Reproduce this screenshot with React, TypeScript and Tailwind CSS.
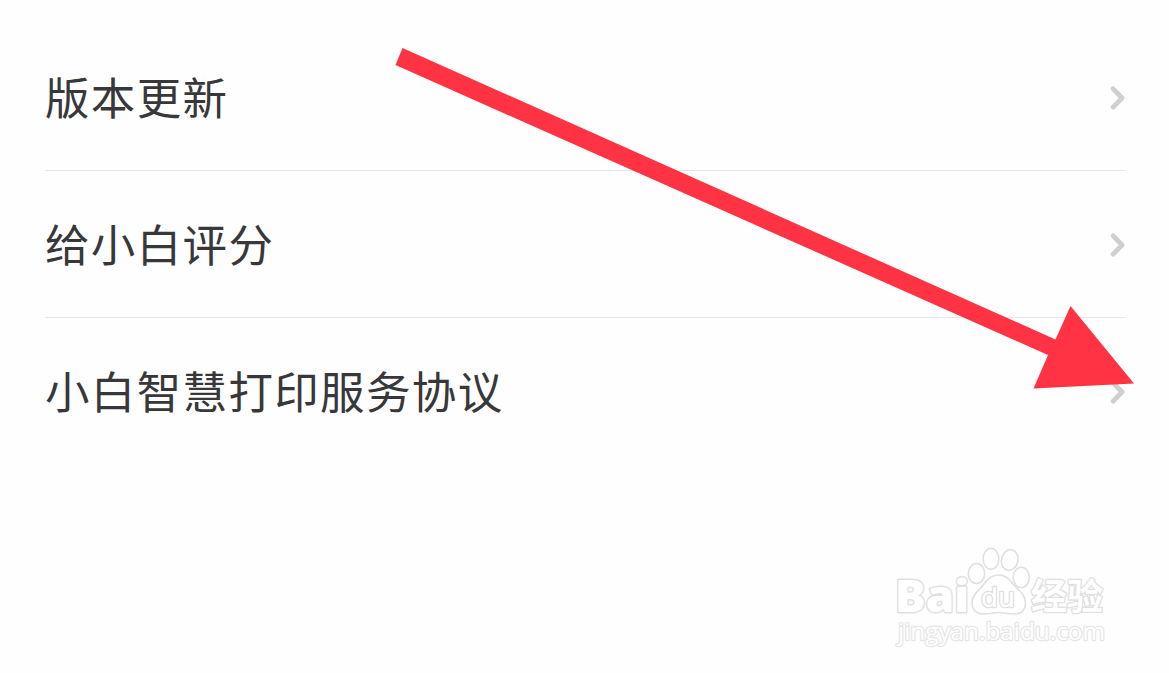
const items = ["版本更新", "给小白评分", "小白智慧打印服务协议"];

function Chevron() {
  return (
    <svg width="16" height="28" viewBox="0 0 16 28" fill="none" className="mt-0.5 shrink-0">
      <path d="M4.2 4.8 L13 14 L4.2 23.2" stroke="#cfcfcf" strokeWidth="4.8" strokeLinecap="round" strokeLinejoin="round" />
    </svg>
  );
}

function Watermark() {
  return (
    <svg width="220" height="110" viewBox="0 0 220 110" className="absolute top-[543px] left-[890px]">
      <g fill="#fff" stroke="#e0e0e0" strokeWidth="1.6" strokeLinejoin="round">
        <text
          x="5"
          y="68.5"
          fontSize="45"
          fontWeight="800"
          strokeWidth="2.8"
          paintOrder="stroke"
          textLength="74"
          lengthAdjust="spacingAndGlyphs"
          fontFamily="'Open Sans', sans-serif"
        >
          Bai
        </text>
        <ellipse cx="86.5" cy="30.5" rx="8.2" ry="10" />
        <ellipse cx="101" cy="15.8" rx="7.8" ry="10.5" />
        <ellipse cx="119.7" cy="17" rx="8.2" ry="10.5" transform="rotate(12 119.7 17)" />
        <ellipse cx="131.3" cy="34.5" rx="8" ry="10.2" />
        <path d="M108.5 32 C102 32 98 35 94 41 C90 47 82 51 82 60 C82 68 88 71.5 95 71 C101 70.5 104 69.5 109 69.5 C114 69.5 118 71 124 71 C131 71 135.5 67 135.5 60 C135.5 51 128 47 123 41 C119 35 115 32 108.5 32 Z" />
        <text
          x="91"
          y="64"
          fontSize="26"
          strokeWidth="2.6"
          paintOrder="stroke"
          textLength="34"
          lengthAdjust="spacingAndGlyphs"
          fontFamily="'DejaVu Sans', sans-serif"
        >
          du
        </text>
        <text
          x="141"
          y="66.5"
          fontSize="36"
          fontWeight="700"
          strokeWidth="2.6"
          paintOrder="stroke"
          textLength="72"
          lengthAdjust="spacingAndGlyphs"
          fontFamily="'Noto Sans CJK SC', sans-serif"
        >
          经验
        </text>
        <text
          x="8"
          y="97"
          fontSize="23"
          strokeWidth="2.4"
          stroke="#e6e6e6"
          paintOrder="stroke"
          textLength="207"
          lengthAdjust="spacingAndGlyphs"
          fontFamily="'Open Sans', sans-serif"
        >
          jingyan.baidu.com
        </text>
      </g>
    </svg>
  );
}

export default function App() {
  return (
    <main className="relative h-[673px] w-[1169px] overflow-hidden bg-[#fefefe] pt-6 pr-11 pl-[45px]">
      <ul>
        {items.map((item) => (
          <li key={item} className="flex h-[147px] items-center justify-between border-b border-[#e6e6e6] last:border-transparent">
            <span className="pb-0.5 font-['Noto_Sans_CJK_SC',sans-serif] text-[44.5px] leading-none tracking-[1.35px] text-[#38383a]">
              {item}
            </span>
            <Chevron />
          </li>
        ))}
      </ul>

      <svg width="1169" height="673" viewBox="0 0 1169 673" className="pointer-events-none absolute inset-0">
        <polygon points="402.5,48 1055.5,339.5 1070.5,306 1134,383.5 1033.5,388.5 1048,355 395.5,65" fill="#ff3344" />
      </svg>

      <Watermark />
    </main>
  );
}
